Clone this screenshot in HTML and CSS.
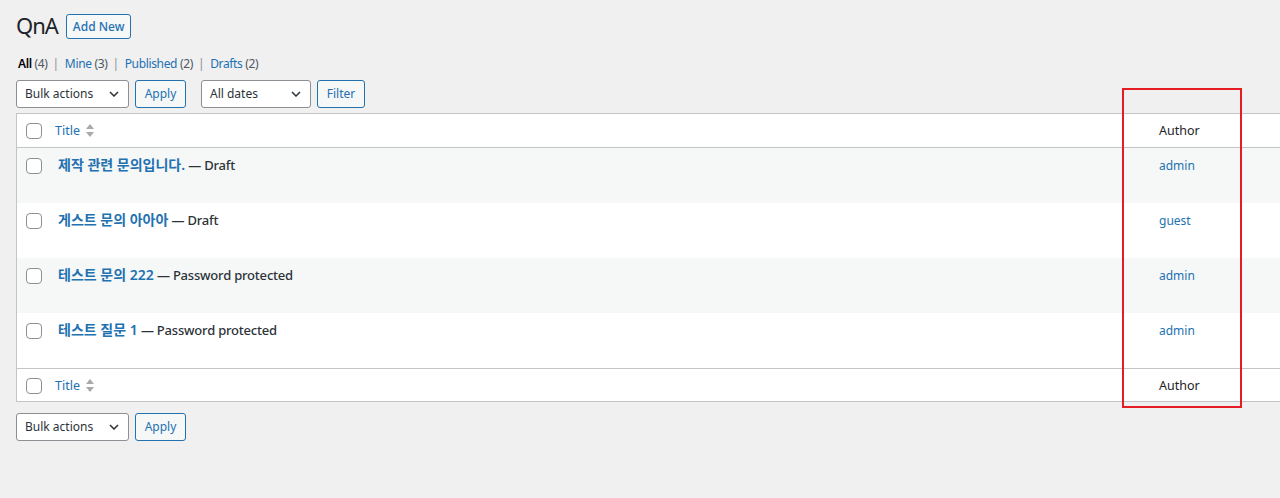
FILE: index.html
```html
<!DOCTYPE html>
<html lang="ko">
<head>
<meta charset="utf-8">
<title>QnA</title>
<link rel="stylesheet" href="styles.css">
</head>
<body>
<div class="wrap">
  <div class="heading">
    <h1>QnA</h1>
    <a class="page-title-action" href="#">Add New</a>
  </div>
  <ul class="subsubsub">
    <li><a class="current" href="#">All <span class="count">(4)</span></a><span class="sep">|</span></li>
    <li><a href="#">Mine <span class="count">(3)</span></a><span class="sep">|</span></li>
    <li><a href="#">Published <span class="count">(2)</span></a><span class="sep">|</span></li>
    <li><a href="#">Drafts <span class="count">(2)</span></a></li>
  </ul>
  <div class="tablenav top">
    <div class="actions">
      <div class="select bulk">Bulk actions<svg class="chev" width="10" height="6" viewBox="0 0 10 6"><polyline points="1,1 5,5 9,1" fill="none" stroke="#2c3338" stroke-width="1.5"/></svg></div>
      <button class="button apply">Apply</button>
    </div>
    <div class="actions">
      <div class="select dates">All dates<svg class="chev" width="10" height="6" viewBox="0 0 10 6"><polyline points="1,1 5,5 9,1" fill="none" stroke="#2c3338" stroke-width="1.5"/></svg></div>
      <button class="button filter">Filter</button>
    </div>
  </div>
  <div class="table-clip">
    <table class="list">
      <colgroup>
        <col class="c-cb">
        <col class="c-title">
        <col class="c-author">
      </colgroup>
      <thead>
        <tr>
          <td class="cb"><span class="checkbox"></span></td>
          <th class="sortable"><a href="#">Title</a><svg class="sort" width="8" height="13" viewBox="0 0 8 13"><path d="M4 0L8 5H0Z M0 8H8L4 13Z" fill="#a7aaad"/></svg></th>
          <th class="author-h">Author</th>
        </tr>
      </thead>
      <tbody>
        <tr class="alt">
          <th class="cb"><span class="checkbox"></span></th>
          <td class="title"><strong><a class="row-title" href="#">제작 관련 문의입니다.</a><span class="post-state"> — Draft</span></strong></td>
          <td class="author"><a href="#">admin</a></td>
        </tr>
        <tr>
          <th class="cb"><span class="checkbox"></span></th>
          <td class="title"><strong><a class="row-title" href="#">게스트 문의 아아아</a><span class="post-state"> — Draft</span></strong></td>
          <td class="author"><a href="#">guest</a></td>
        </tr>
        <tr class="alt">
          <th class="cb"><span class="checkbox"></span></th>
          <td class="title"><strong><a class="row-title" href="#">테스트 문의 222</a><span class="post-state"> — Password protected</span></strong></td>
          <td class="author"><a href="#">admin</a></td>
        </tr>
        <tr>
          <th class="cb"><span class="checkbox"></span></th>
          <td class="title"><strong><a class="row-title" href="#">테스트 질문 1</a><span class="post-state"> — Password protected</span></strong></td>
          <td class="author"><a href="#">admin</a></td>
        </tr>
      </tbody>
      <tfoot>
        <tr>
          <td class="cb"><span class="checkbox"></span></td>
          <th class="sortable"><a href="#">Title</a><svg class="sort" width="8" height="13" viewBox="0 0 8 13"><path d="M4 0L8 5H0Z M0 8H8L4 13Z" fill="#a7aaad"/></svg></th>
          <th class="author-h">Author</th>
        </tr>
      </tfoot>
    </table>
  </div>
  <div class="tablenav bottom">
    <div class="actions">
      <div class="select bulk">Bulk actions<svg class="chev" width="10" height="6" viewBox="0 0 10 6"><polyline points="1,1 5,5 9,1" fill="none" stroke="#2c3338" stroke-width="1.5"/></svg></div>
      <button class="button apply">Apply</button>
    </div>
  </div>
</div>
<div class="annotation"></div>
</body>
</html>
```

FILE: styles.css
```css
* { box-sizing: border-box; }
html, body { margin: 0; padding: 0; }
body {
  background: #f0f0f1;
  color: #3c434a;
  font-family: "Noto Sans", "Noto Sans CJK KR", sans-serif;
  font-size: 13px;
  line-height: 1.4;
  overflow: hidden;
  width: 1280px;
  height: 498px;
  position: relative;
}
a { text-decoration: none; color: #2271b1; }

.wrap { padding: 10px 0 0 16px; }

.heading { display: flex; align-items: flex-start; gap: 8px; height: 36px; }
.heading h1 {
  margin: 0;
  font-size: 22px;
  font-weight: 400;
  line-height: 30px;
  color: #1d2327;
  letter-spacing: -1px;
}
.page-title-action {
  margin-top: 4px;
  height: 25px;
  padding: 0 6px;
  border: 1px solid #2271b1;
  border-radius: 3px;
  background: #f6f7f7;
  color: #2271b1;
  font-weight: 500;
  line-height: 23px;
  font-size: 12px;
}

.subsubsub {
  list-style: none;
  margin: 9px 0 0 2px;
  padding: 0;
  display: flex;
  line-height: 18px;
  height: 18px;
  font-size: 12px;
  color: #646970;
  letter-spacing: -0.35px;
}
.subsubsub li { white-space: pre; }
.subsubsub a { color: #2271b1; }
.subsubsub a.current { color: #000; font-weight: 600; }
.subsubsub .count { color: #50575e; font-weight: 400; }
.subsubsub .sep { color: #8c8f94; margin: 0 6px 0 5px; }

.tablenav { display: flex; gap: 15px; height: 28px; }
.tablenav.top { margin-top: 7px; }
.tablenav.bottom { margin-top: 11px; }
.actions { display: flex; gap: 6px; }

.select {
  display: flex;
  align-items: center;
  justify-content: space-between;
  height: 28px;
  padding: 0 9px 0 8px;
  border: 1px solid #8c8f94;
  border-radius: 3px;
  background: #fff;
  color: #2c3338;
  font-size: 12px;
}
.select.bulk { width: 113px; }
.select.dates { width: 110px; }

.button {
  height: 28px;
  padding: 0;
  border: 1px solid #2271b1;
  border-radius: 3px;
  background: #f6f7f7;
  color: #2271b1;
  font-family: inherit;
  font-size: 12px;
  line-height: 26px;
}
.button.apply { width: 51px; }
.button.filter { width: 48px; }

.table-clip { margin-top: 5px; overflow: hidden; }
.list {
  width: 1300px;
  table-layout: fixed;
  border-collapse: separate;
  border-spacing: 0;
  background: #fff;
  border: 1px solid #c3c4c7;
}
.c-cb { width: 31px; }
.c-title { width: 1101px; }
.c-author { width: 166px; }

.list th, .list td { padding: 0; vertical-align: top; text-align: left; font-weight: 400; }

.list thead th, .list thead td { border-bottom: 1px solid #c3c4c7; height: 34px; }
.list tfoot th, .list tfoot td { border-top: 1px solid #c3c4c7; height: 33px; }

.list thead .cb { padding: 9px 0 0 9px; }
.list tfoot .cb { padding: 9px 0 0 9px; }
.list .sortable { padding: 8px 0 0 7px; font-size: 12.5px; }
.list tfoot .sortable, .list tfoot .author-h { padding-top: 8px; }
.list .sortable a { color: #2271b1; }
.list .sortable .sort { margin-left: 6px; vertical-align: -2px; }
.list .author-h { padding: 8px 10px 0; color: #1d2327; font-size: 12.5px; }

.list tbody tr { height: 55px; }
.list tbody tr.alt { background: #f6f7f7; }
.list tbody .cb { padding: 10px 0 0 9px; }
.list td.title { padding: 7px 10px 0; font-size: 14px; line-height: 20px; }
.list td.title strong { font-weight: 600; color: #2c3338; }
.row-title { color: #2271b1; font-weight: 600; }
.post-state { font-weight: 500; color: #2c3338; font-size: 13px; letter-spacing: -0.2px; }
.list td.author { padding: 8px 10px 0; line-height: 19px; font-size: 12px; }

.checkbox {
  display: block;
  width: 16px;
  height: 16px;
  border: 1px solid #8c8f94;
  border-radius: 4px;
  background: #fff;
}

.annotation {
  position: absolute;
  left: 1122px;
  top: 88px;
  width: 120px;
  height: 320px;
  border: 2.5px solid #e51c23;
}
```
